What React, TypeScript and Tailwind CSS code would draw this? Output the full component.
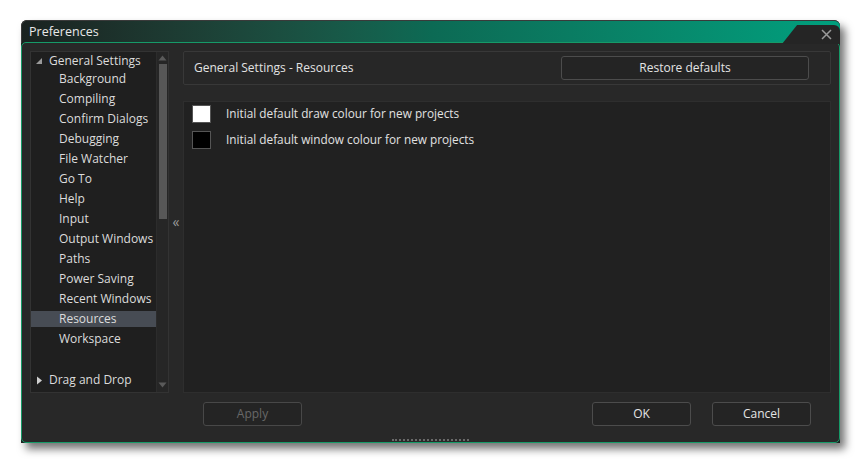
const tree = [
  'Background',
  'Compiling',
  'Confirm Dialogs',
  'Debugging',
  'File Watcher',
  'Go To',
  'Help',
  'Input',
  'Output Windows',
  'Paths',
  'Power Saving',
  'Recent Windows',
  'Resources',
  'Workspace',
]

const font = { fontFamily: '"Open Sans", "Noto Sans", sans-serif' }

const Button = ({ label, disabled, className = '' }: { label: string; disabled?: boolean; className?: string }) => (
  <div
    className={`h-[24px] flex items-center justify-center rounded-[3px] border text-[12px] ${
      disabled ? 'border-[#484848] text-[#686868]' : 'border-[#4c4c4c] text-[#e4e4e4]'
    } bg-[#242424] ${className}`}
  >
    {label}
  </div>
)

const App = () => {
  return (
    <div className="w-[860px] h-[463px] bg-white overflow-hidden pt-[20px] pl-[21px]" style={font}>
      <div className="w-[819px] h-[423px] flex flex-col rounded-t-[6px] bg-[#1c2422] shadow-[5px_6px_8px_rgba(0,0,0,0.55)]">
        {/* Title bar */}
        <div className="h-[23px] flex rounded-t-[6px] border-t border-l border-[#3a3a3a] bg-gradient-to-r from-[#1a2220] via-[#0c6a54] to-[#00a07e]">
          <div className="flex-1 pl-[7px] pt-[3px] text-[12.5px] text-[#e8e8e8] leading-[16px]">Preferences</div>
          <div className="w-[58px] h-[19px] mt-[4px] flex items-center justify-end pr-[8px] bg-[#252525] rounded-tr-[6px] [clip-path:polygon(26%_0,100%_0,100%_100%,0_100%)]">
            <svg width="11" height="11" viewBox="0 0 11 11">
              <path d="M1 1L10 10M10 1L1 10" stroke="#9a9a9a" strokeWidth="1.5" />
            </svg>
          </div>
        </div>

        {/* Body */}
        <div className="flex-1 -mt-[1px] flex flex-col rounded-[5px] border border-[#169a68] bg-[#282828] px-[8px] pt-[8px]">
          <div className="h-[342px] flex">
            {/* Tree */}
            <div className="w-[139px] flex border border-[#333] bg-[#1f1f1f]">
              <div className="flex-1 flex flex-col text-[12px] text-[#dcdcdc]">
                <div className="h-[17px] flex items-center pl-[4px] pt-[1px]">
                  <svg width="8" height="8" viewBox="0 0 8 8" className="mr-[6px]">
                    <path d="M7 1V7H1Z" fill="#9a9a9a" />
                  </svg>
                  General Settings
                </div>
                {tree.map((t) => (
                  <div key={t} className="h-[20px] flex items-center">
                    <div
                      className={`h-[16px] w-full flex items-center pl-[28px] ${
                        t === 'Resources' ? 'bg-[#474c54]' : ''
                      }`}
                    >
                      {t}
                    </div>
                  </div>
                ))}
                <div className="h-[21px]" />
                <div className="h-[20px] flex items-center pl-[5px]">
                  <svg width="7" height="9" viewBox="0 0 7 9" className="mr-[6px]">
                    <path d="M1 0.5L6 4.5L1 8.5Z" fill="#cfcfcf" />
                  </svg>
                  Drag and Drop
                </div>
              </div>
              {/* Scrollbar */}
              <div className="w-[12px] flex flex-col items-center bg-[#262626] border-l border-[#2c2c2c]">
                <svg width="9" height="6" viewBox="0 0 9 6" className="mt-[3px]">
                  <path d="M4.5 0.5L8.5 5.5H0.5Z" fill="#5a5a5a" />
                </svg>
                <div className="w-[8px] h-[155px] mt-[3px] bg-[#575757]" />
                <div className="flex-1" />
                <svg width="9" height="6" viewBox="0 0 9 6" className="mb-[4px]">
                  <path d="M0.5 0.5H8.5L4.5 5.5Z" fill="#5a5a5a" />
                </svg>
              </div>
            </div>

            {/* Splitter */}
            <div className="w-[14px] flex items-center justify-center">
              <span className="text-[14px] text-[#9a9a9a] leading-none">«</span>
            </div>

            {/* Right column */}
            <div className="flex-1 flex flex-col gap-[16px]">
              <div className="h-[34px] flex items-center border border-[#383838] rounded-[2px] bg-[#272727] pl-[10px] pr-[21px]">
                <div className="flex-1 text-[12px] text-[#e2e2e2]">General Settings - Resources</div>
                <Button label="Restore defaults" className="w-[248px]" />
              </div>
              <div className="flex-1 flex flex-col border border-[#2e2e2e] bg-[#212121] pl-[8px] pt-[3px] gap-[8px]">
                <div className="flex items-center">
                  <div className="w-[19px] h-[18px] border border-[#555] bg-white" />
                  <span className="ml-[15px] text-[11.8px] text-[#e2e2e2]">Initial default draw colour for new projects</span>
                </div>
                <div className="flex items-center">
                  <div className="w-[19px] h-[18px] border border-[#555] bg-black" />
                  <span className="ml-[15px] text-[11.8px] text-[#e2e2e2]">Initial default window colour for new projects</span>
                </div>
              </div>
            </div>
          </div>

          {/* Bottom buttons */}
          <div className="flex pt-[9px]">
            <div className="w-[153px]" />
            <div className="flex-1 flex pl-[20px] pr-[20px]">
              <Button label="Apply" disabled className="w-[99px]" />
              <div className="flex-1" />
              <Button label="OK" className="w-[99px]" />
              <Button label="Cancel" className="w-[99px] ml-[21px]" />
            </div>
          </div>
          <div className="flex-1 flex items-end justify-center">
            <div className="w-[77px] h-[3px] border-t-2 border-dotted border-[#6a6a6a]" />
          </div>
        </div>
      </div>
    </div>
  )
}

export default App
